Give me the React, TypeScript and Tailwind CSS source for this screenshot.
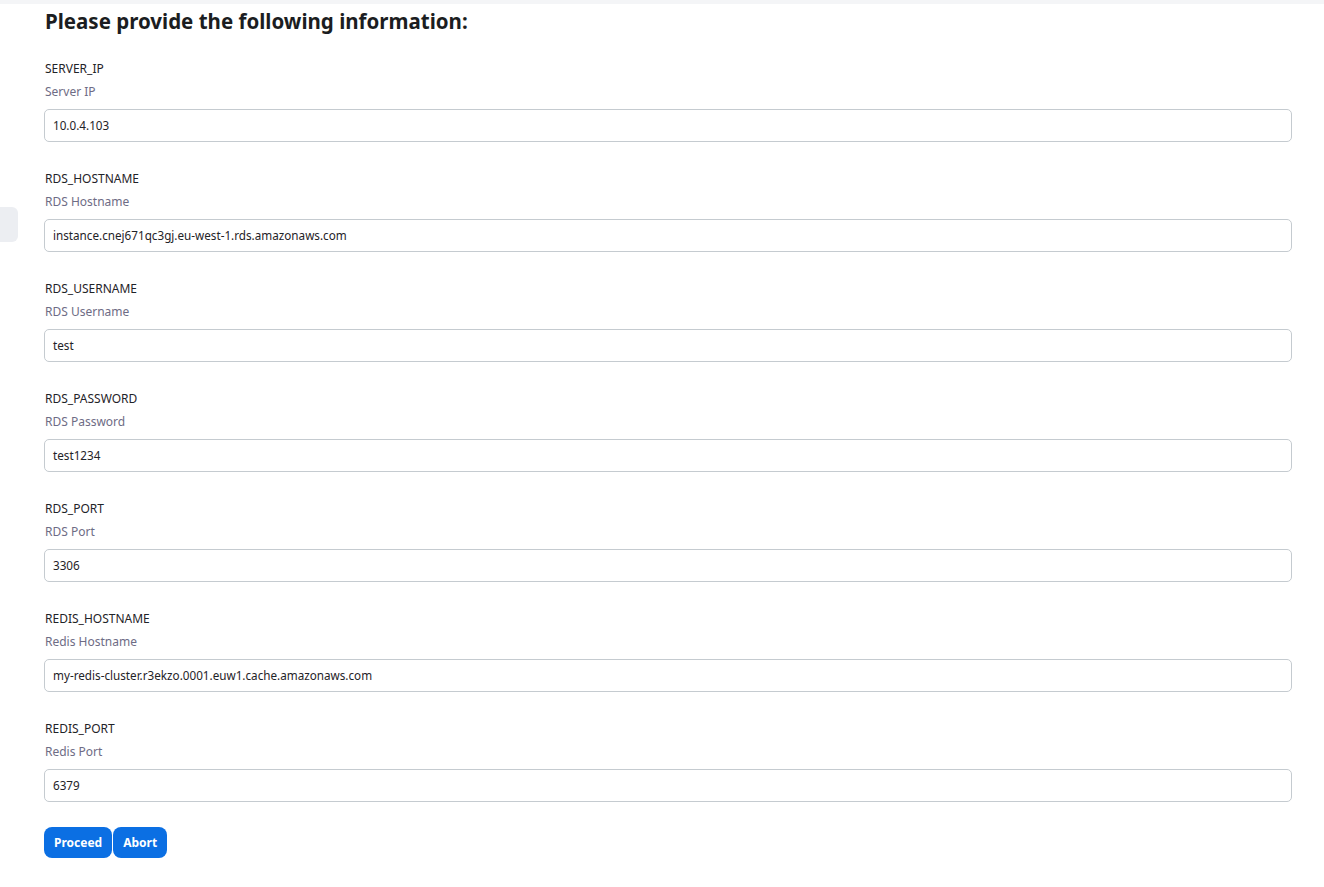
import React from "react";

const fields = [
  { name: "SERVER_IP", desc: "Server IP", value: "10.0.4.103" },
  { name: "RDS_HOSTNAME", desc: "RDS Hostname", value: "instance.cnej671qc3gj.eu-west-1.rds.amazonaws.com" },
  { name: "RDS_USERNAME", desc: "RDS Username", value: "test" },
  { name: "RDS_PASSWORD", desc: "RDS Password", value: "test1234" },
  { name: "RDS_PORT", desc: "RDS Port", value: "3306" },
  { name: "REDIS_HOSTNAME", desc: "Redis Hostname", value: "my-redis-cluster.r3ekzo.0001.euw1.cache.amazonaws.com" },
  { name: "REDIS_PORT", desc: "Redis Port", value: "6379" },
];

export default function App() {
  return (
    <div
      className="relative w-[1324px] h-[887px] bg-white overflow-hidden text-[#1f2328]"
      style={{ fontFamily: '"Noto Sans", "Open Sans", sans-serif' }}
    >
      <div className="h-[4px] bg-[#f4f5f7]" />
      <div className="absolute left-0 top-[207px] w-[18px] h-[35px] rounded-r-[6px] bg-[#eceef2]" />
      <div className="pl-[44px] pr-[32px]">
        <h1 className="mt-[3px] text-[20.5px] leading-[28px] font-bold text-[#1b1d21] pl-[1px]">
          Please provide the following information:
        </h1>
        <div className="mt-[25px] flex flex-col gap-[28px]">
          {fields.map((f) => (
            <div key={f.name} className="flex flex-col">
              <div className="text-[12px] leading-[18px] text-[#1f2328] pl-[1px]">{f.name}</div>
              <div className="mt-[5px] text-[12px] leading-[18px] text-[#6e6c85] pl-[1px]">{f.desc}</div>
              <div className="mt-[8px] h-[33px] border border-[#c5cbd0] rounded-[5px] flex items-center px-[8px] text-[11.7px] text-[#1f2328]">
                {f.value}
              </div>
            </div>
          ))}
        </div>
        <div className="mt-[25px] flex">
          <button className="h-[31px] px-[10px] rounded-[8px] bg-[#0b6fe3] text-white text-[12px] font-bold">
            Proceed
          </button>
          <button className="ml-[1px] h-[31px] px-[10px] rounded-[8px] bg-[#0b6fe3] text-white text-[12px] font-bold">
            Abort
          </button>
        </div>
      </div>
    </div>
  );
}
